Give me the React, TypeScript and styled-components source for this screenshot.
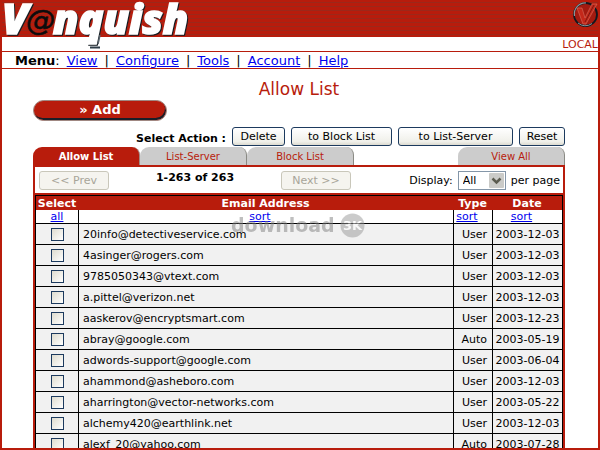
import React from "react";
import styled, { createGlobalStyle, css } from "styled-components";

const RED = "#b81c0c";

const GlobalStyle = createGlobalStyle`
  * { box-sizing: border-box; }
  body {
    margin: 0;
    background: #fff;
    color: #000;
    font-family: "DejaVu Sans", Verdana, sans-serif;
    font-size: 11px;
  }
  a { color: #00e; }
`;

const Page = styled.div`
  height: 100vh;
  display: flex;
  flex-direction: column;
  overflow: hidden;
  border: 2px solid ${RED};
  border-top: 0;
`;

const Banner = styled.header`
  flex: none;
  height: 51px;
  display: flex;
  justify-content: space-between;
  background:
    linear-gradient(transparent 37px, #fff 37px),
    repeating-linear-gradient(${RED} 0 2px, #9c281a 2px 3px, ${RED} 3px 4px);
`;

const Side = styled.div`
  display: flex;
  flex-direction: column;
  align-items: flex-end;
  justify-content: space-between;
`;

const Region = styled.span`
  color: ${RED};
  font-size: 11px;
  line-height: 13px;
`;

const MenuBar = styled.nav`
  flex: none;
  display: flex;
  gap: 7px;
  height: 18px;
  padding-left: 13px;
  border-top: 1px solid ${RED};
  border-bottom: 1px solid ${RED};
  font-size: 13px;
  line-height: 17px;
`;

const Content = styled.main`
  flex: 1;
  min-height: 0;
  overflow: hidden;
  display: flex;
  flex-direction: column;
  padding: 10px 33px 0 31px;
`;

const Title = styled.h1`
  margin: 0;
  color: ${RED};
  font-size: 17px;
  line-height: 21px;
  font-weight: 400;
  text-align: center;
`;

const AddButton = styled.button`
  flex: none;
  width: 134px;
  height: 21px;
  padding: 0 0 2px;
  border: 1px solid #a08882;
  border-radius: 11px;
  background: ${RED};
  box-shadow: inset -1px -2px 0 #1a1e28;
  color: #fff;
  font: bold 13px/16px "DejaVu Sans", sans-serif;
`;

const Actions = styled.div`
  flex: none;
  display: flex;
  align-items: flex-end;
  justify-content: flex-end;
  gap: 6px;
  margin: 6px 0 1px;
`;

const ActionsLabel = styled.b`
  line-height: 14px;
`;

const Button = styled.button<{ $width: number }>`
  width: ${(p) => p.$width}px;
  height: 19px;
  padding: 0;
  border: 1px solid #1c3a5e;
  border-radius: 3px;
  background: linear-gradient(#fff, #f0f0ea 80%, #dcdad0);
  color: #000;
  font: 11px/15px "DejaVu Sans", sans-serif;
  white-space: nowrap;
  &:disabled {
    border-color: #c9c7ba;
    background: #f5f4ef;
    color: #a8a599;
  }
`;

const Tabs = styled.div`
  flex: none;
  display: flex;
`;

const Tab = styled.button<{ $active?: boolean; $end?: boolean }>`
  width: 107px;
  height: 18px;
  padding: 1px 0 0;
  border: 0;
  border-right: 1px solid #8a8a84;
  border-radius: 9px 8px 0 0;
  background: #ccc;
  color: ${RED};
  font: 10px/14px "DejaVu Sans", sans-serif;
  ${(p) => p.$active && css`
    border-color: #a08882;
    background: ${RED};
    color: #fff;
    font-weight: bold;
  `}
  ${(p) => p.$end && css`margin-left: auto;`}
`;

const Panel = styled.section`
  flex: none;
  border: 2px solid ${RED};
`;

const Toolbar = styled.div`
  display: flex;
  align-items: center;
  justify-content: space-between;
  height: 28px;
  padding: 0 3px 0 4px;
  border-bottom: 2px solid ${RED};
`;

const Pager = styled.div`
  display: flex;
  align-items: center;
  justify-content: space-between;
  width: 312px;
`;

const Count = styled.b`
  padding-bottom: 5px;
`;

const PageSize = styled.label`
  display: flex;
  align-items: center;
  gap: 5px;
`;

const SelectBox = styled.span`
  position: relative;
  display: block;
  height: 19px;
  svg {
    position: absolute;
    top: 2px;
    right: 2px;
    pointer-events: none;
  }
`;

const Select = styled.select`
  appearance: none;
  display: block;
  width: 48px;
  height: 19px;
  padding: 0 4px;
  border: 1px solid #8496a8;
  border-radius: 0;
  background: #fff;
  color: #000;
  font: 11px/15px "DejaVu Sans", sans-serif;
`;

const TableArea = styled.div`
  position: relative;
`;

const Table = styled.table`
  width: 100%;
  table-layout: fixed;
  border-collapse: separate;
  border-spacing: 0;
  line-height: 13px;
`;

const Column = styled.col<{ $width?: number }>`
  width: ${(p) => (p.$width ? `${p.$width}px` : "auto")};
`;

const Head = styled.th`
  height: 15px;
  padding: 0;
  border-top: 1px solid #000;
  background: ${RED};
  color: #fff;
  &:first-child { border-left: 1px solid #000; }
  &:last-child { border-right: 1px solid #000; }
`;

const Cell = styled.td<{ $align?: "left" | "center" | "right"; $plain?: boolean }>`
  height: ${(p) => (p.$plain ? 14 : 21)}px;
  padding: 0 ${(p) => (p.$align === "right" ? 5 : 0)}px 0 ${(p) => (p.$align === "left" ? 4 : 0)}px;
  border-left: 1px solid #000;
  border-bottom: 1px solid #000;
  background: ${(p) => (p.$plain ? "#fff" : "#f1f1f1")};
  text-align: ${(p) => p.$align ?? "center"};
  white-space: nowrap;
  &:last-child { border-right: 1px solid #000; }
`;

const SortCell = styled(Cell)<{ $indent?: number }>`
  padding: 0 ${(p) => p.$indent ?? 0}px 0 0;
`;

const Check = styled.input`
  appearance: none;
  display: block;
  width: 13px;
  height: 13px;
  margin: 0 auto;
  border: 1px solid #1c3a5e;
  background: linear-gradient(135deg, #dedccf, #fff);
`;

const Watermark = styled.div`
  position: absolute;
  top: 17px;
  left: 50%;
  display: flex;
  align-items: center;
  gap: 5px;
  margin-left: -68px;
  color: #808080;
  font: bold 19px/26px "DejaVu Sans", sans-serif;
  opacity: 0.5;
  pointer-events: none;
`;

const LogoArt = styled.svg`
  font-family: "Open Sans", sans-serif;
  font-style: italic;
  font-weight: 800;
  overflow: visible;
`;

const LogoLetters = styled.text`
  fill: #fff;
  stroke: #fff;
  stroke-width: 1.6;
  filter: drop-shadow(1px 1px 0 #141c22);
`;

const LogoAt = styled.text`
  fill: #0c0c0c;
  stroke: #0c0c0c;
  stroke-width: 0.6;
  font-family: "DejaVu Sans", sans-serif;
  font-weight: 400;
`;

const menu = ["View", "Configure", "Tools", "Account", "Help"];

const rows: [string, string, string][] = [
  ["20info@detectiveservice.com", "User", "2003-12-03"],
  ["4asinger@rogers.com", "User", "2003-12-03"],
  ["9785050343@vtext.com", "User", "2003-12-03"],
  ["a.pittel@verizon.net", "User", "2003-12-03"],
  ["aaskerov@encryptsmart.com", "User", "2003-12-23"],
  ["abray@google.com", "Auto", "2003-05-19"],
  ["adwords-support@google.com", "User", "2003-06-04"],
  ["ahammond@asheboro.com", "User", "2003-12-03"],
  ["aharrington@vector-networks.com", "User", "2003-05-22"],
  ["alchemy420@earthlink.net", "User", "2003-12-03"],
  ["alexf_20@yahoo.com", "Auto", "2003-07-28"],
];

function Logo() {
  return (
    <LogoArt width="192" height="50" viewBox="0 0 192 50" role="img" aria-label="Vanquish">
      <LogoLetters x="0" y="34" fontSize="43">V</LogoLetters>
      <LogoLetters x="51" y="34" fontSize="41">nquish</LogoLetters>
      <LogoAt x="24" y="30" fontSize="29">@</LogoAt>
      <path d="M98 35 L96 44" stroke="#59636b" strokeWidth="1.5" />
      <path d="M88 47.5 H98" stroke="#2e3d48" strokeWidth="2" />
    </LogoArt>
  );
}

function Emblem() {
  return (
    <svg width="26" height="29" viewBox="0 0 26 29" role="img" aria-label="Vanquish emblem">
      <circle cx="13.5" cy="14.5" r="11.5" fill="#a31a10" stroke="#111820" strokeWidth="1.8" />
      <path d="M2.5 16 A11 11 0 0 1 14 3" fill="none" stroke="#8d9499" strokeWidth="1.2" />
      <path d="M6 23 A11 11 0 0 0 20 23.5" fill="none" stroke="#88939a" strokeWidth="1" />
      <path d="M5 8 H10 L13 18 L20 4 H25 L14 24 H11 Z" fill="#c4281a" stroke="#d8705f" strokeWidth="0.6" />
      <path d="M13 22 L22 5" stroke="#7c1710" strokeWidth="1" />
    </svg>
  );
}

export default function App() {
  return (
    <>
      <GlobalStyle />
      <Page>
        <Banner>
          <Logo />
          <Side>
            <Emblem />
            <Region>LOCAL</Region>
          </Side>
        </Banner>
        <MenuBar>
          <span><b>Menu</b>:</span>
          {menu.map((item, i) => (
            <React.Fragment key={item}>
              {i > 0 && <span>|</span>}
              <a href={`#${item.toLowerCase()}`}>{item}</a>
            </React.Fragment>
          ))}
        </MenuBar>
        <Content>
          <Title>Allow List</Title>
          <AddButton type="button">» Add</AddButton>
          <Actions>
            <ActionsLabel>Select Action :</ActionsLabel>
            <Button type="button" $width={53}>Delete</Button>
            <Button type="button" $width={101}>to Block List</Button>
            <Button type="button" $width={115}>to List-Server</Button>
            <Button type="button" $width={46}>Reset</Button>
          </Actions>
          <Tabs>
            <Tab type="button" $active>Allow List</Tab>
            <Tab type="button">List-Server</Tab>
            <Tab type="button">Block List</Tab>
            <Tab type="button" $end>View All</Tab>
          </Tabs>
          <Panel>
            <Toolbar>
              <Pager>
                <Button type="button" $width={70} disabled>&lt;&lt; Prev</Button>
                <Count>1-263 of 263</Count>
                <Button type="button" $width={70} disabled>Next &gt;&gt;</Button>
              </Pager>
              <PageSize>
                Display:
                <SelectBox>
                  <Select defaultValue="All">
                    <option>All</option>
                    <option>25</option>
                    <option>50</option>
                  </Select>
                  <svg width="15" height="15" viewBox="0 0 15 15" aria-hidden="true">
                    <rect width="15" height="15" rx="1" fill="#cbcbc8" />
                    <path d="M3.5 5.5 L7.5 9.5 L11.5 5.5" fill="none" stroke="#5c5c50" strokeWidth="2.5" />
                  </svg>
                </SelectBox>
                per page
              </PageSize>
            </Toolbar>
            <TableArea>
              <Table>
                <colgroup>
                  <Column $width={43} />
                  <Column />
                  <Column $width={39} />
                  <Column $width={71} />
                </colgroup>
                <thead>
                  <tr>
                    <Head>Select</Head>
                    <Head>Email Address</Head>
                    <Head>Type</Head>
                    <Head>Date</Head>
                  </tr>
                </thead>
                <tbody>
                  <tr>
                    <SortCell $plain><a href="#all">all</a></SortCell>
                    <SortCell $plain $indent={12}><a href="#sort-email">sort</a></SortCell>
                    <SortCell $plain $indent={12}><a href="#sort-type">sort</a></SortCell>
                    <SortCell $plain $indent={12}><a href="#sort-date">sort</a></SortCell>
                  </tr>
                  {rows.map(([email, type, date]) => (
                    <tr key={email}>
                      <Cell><Check type="checkbox" aria-label={`Select ${email}`} /></Cell>
                      <Cell $align="left">{email}</Cell>
                      <Cell $align="right">{type}</Cell>
                      <Cell>{date}</Cell>
                    </tr>
                  ))}
                </tbody>
              </Table>
              <Watermark aria-hidden="true">
                download
                <svg width="25" height="25" viewBox="0 0 25 25">
                  <circle cx="12.5" cy="12.5" r="12" fill="#999" />
                  <text x="12.5" y="17" textAnchor="middle" fontFamily="DejaVu Sans, sans-serif" fontWeight="bold" fontSize="13" fill="#fff">3K</text>
                </svg>
              </Watermark>
            </TableArea>
          </Panel>
        </Content>
      </Page>
    </>
  );
}
